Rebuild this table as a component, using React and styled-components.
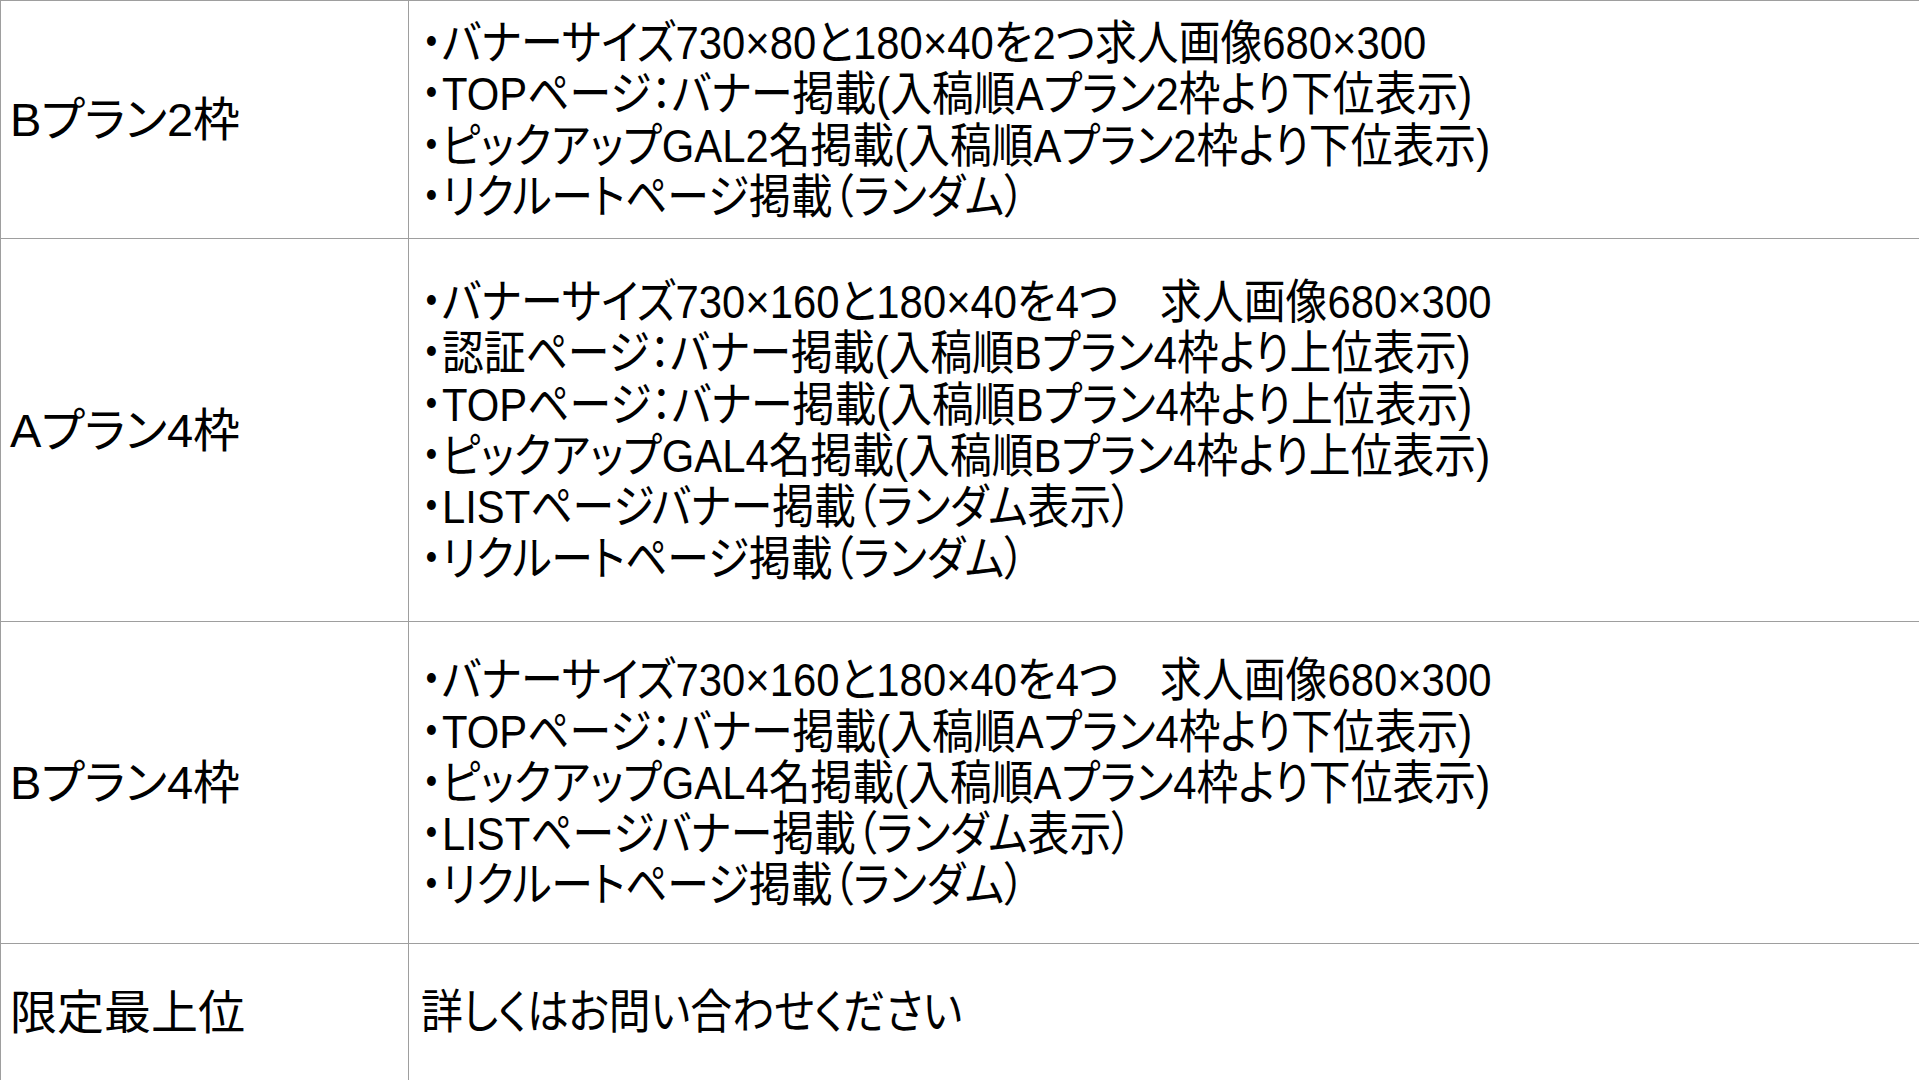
import React from "react";
import styled, { createGlobalStyle } from "styled-components";

const Global = createGlobalStyle`
  html, body { margin: 0; padding: 0; background: #ffffff; }
  body {
    font-family: "Liberation Sans", "Noto Sans CJK JP", sans-serif;
    color: #000000;
    overflow: hidden;
  }
`;

const Table = styled.div`
  width: 1919px;
  border-top: 1px solid #9e9e9e;
  border-left: 1px solid #9e9e9e;
  box-sizing: border-box;
`;

const Row = styled.div`
  display: grid;
  grid-template-columns: 408px 1fr;
  height: ${(p) => p.$h}px;
  border-bottom: 1px solid #9e9e9e;
  box-sizing: border-box;
`;

const Label = styled.div`
  display: flex;
  align-items: center;
  padding-left: 9px;
  border-right: 1px solid #9e9e9e;
  font-size: 47px;
  line-height: 1;
  font-feature-settings: "palt";
  white-space: nowrap;
`;

const Content = styled.div`
  display: flex;
  flex-direction: column;
  justify-content: center;
  padding-left: 12px;
  font-size: 47px;
  line-height: 51.3px;
  font-feature-settings: "palt";
  overflow: hidden;
`;

/* the reference's body text is a horizontally condensed face */
const Line = styled.div`
  white-space: nowrap;
  transform: scaleX(0.89);
  transform-origin: left center;
`;

const rows = [
  {
    h: 238,
    label: "Bプラン2枠",
    lines: [
      "・バナーサイズ730×80と180×40を2つ求人画像680×300",
      "・TOPページ：バナー掲載(入稿順Aプラン2枠より下位表示)",
      "・ピックアップGAL2名掲載(入稿順Aプラン2枠より下位表示)",
      "・リクルートページ掲載（ランダム）",
    ],
  },
  {
    h: 383,
    label: "Aプラン4枠",
    lines: [
      "・バナーサイズ730×160と180×40を4つ　求人画像680×300",
      "・認証ページ：バナー掲載(入稿順Bプラン4枠より上位表示)",
      "・TOPページ：バナー掲載(入稿順Bプラン4枠より上位表示)",
      "・ピックアップGAL4名掲載(入稿順Bプラン4枠より上位表示)",
      "・LISTページバナー掲載（ランダム表示）",
      "・リクルートページ掲載（ランダム）",
    ],
  },
  {
    h: 322,
    label: "Bプラン4枠",
    lines: [
      "・バナーサイズ730×160と180×40を4つ　求人画像680×300",
      "・TOPページ：バナー掲載(入稿順Aプラン4枠より下位表示)",
      "・ピックアップGAL4名掲載(入稿順Aプラン4枠より下位表示)",
      "・LISTページバナー掲載（ランダム表示）",
      "・リクルートページ掲載（ランダム）",
    ],
  },
  {
    h: 137,
    label: "限定最上位",
    lines: ["詳しくはお問い合わせください"],
  },
];

export default function App() {
  return (
    <>
      <Global />
      <Table>
        {rows.map((r) => (
          <Row key={r.label} $h={r.h}>
            <Label>{r.label}</Label>
            <Content>
              {r.lines.map((l, i) => (
                <Line key={i}>{l}</Line>
              ))}
            </Content>
          </Row>
        ))}
      </Table>
    </>
  );
}
